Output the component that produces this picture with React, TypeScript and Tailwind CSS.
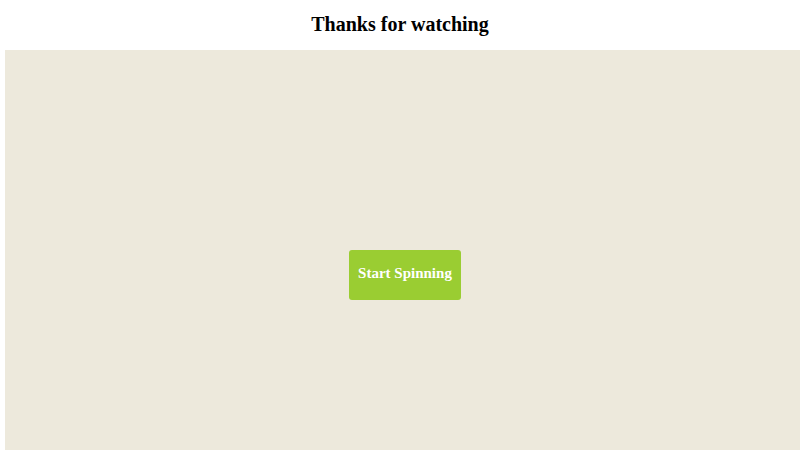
export default function App() {
  return (
    <div className="w-[800px] h-[450px] overflow-hidden bg-white flex flex-col" style={{ fontFamily: '"Liberation Serif", serif' }}>
      {/* Header */}
      <div className="h-[50px] flex items-center justify-center">
        <h2 className="text-[20px] font-bold text-black leading-none -mt-[3px]">Thanks for watching</h2>
      </div>

      {/* Stage */}
      <div className="ml-[5px] flex-1 bg-[#ede9dc] pt-[200px] pl-[344px]">
        <button className="w-[112px] h-[50px] rounded-[3px] bg-[#9acd32] text-white font-bold text-[15px] pb-[3px]">
          Start Spinning
        </button>
      </div>
    </div>
  );
}
